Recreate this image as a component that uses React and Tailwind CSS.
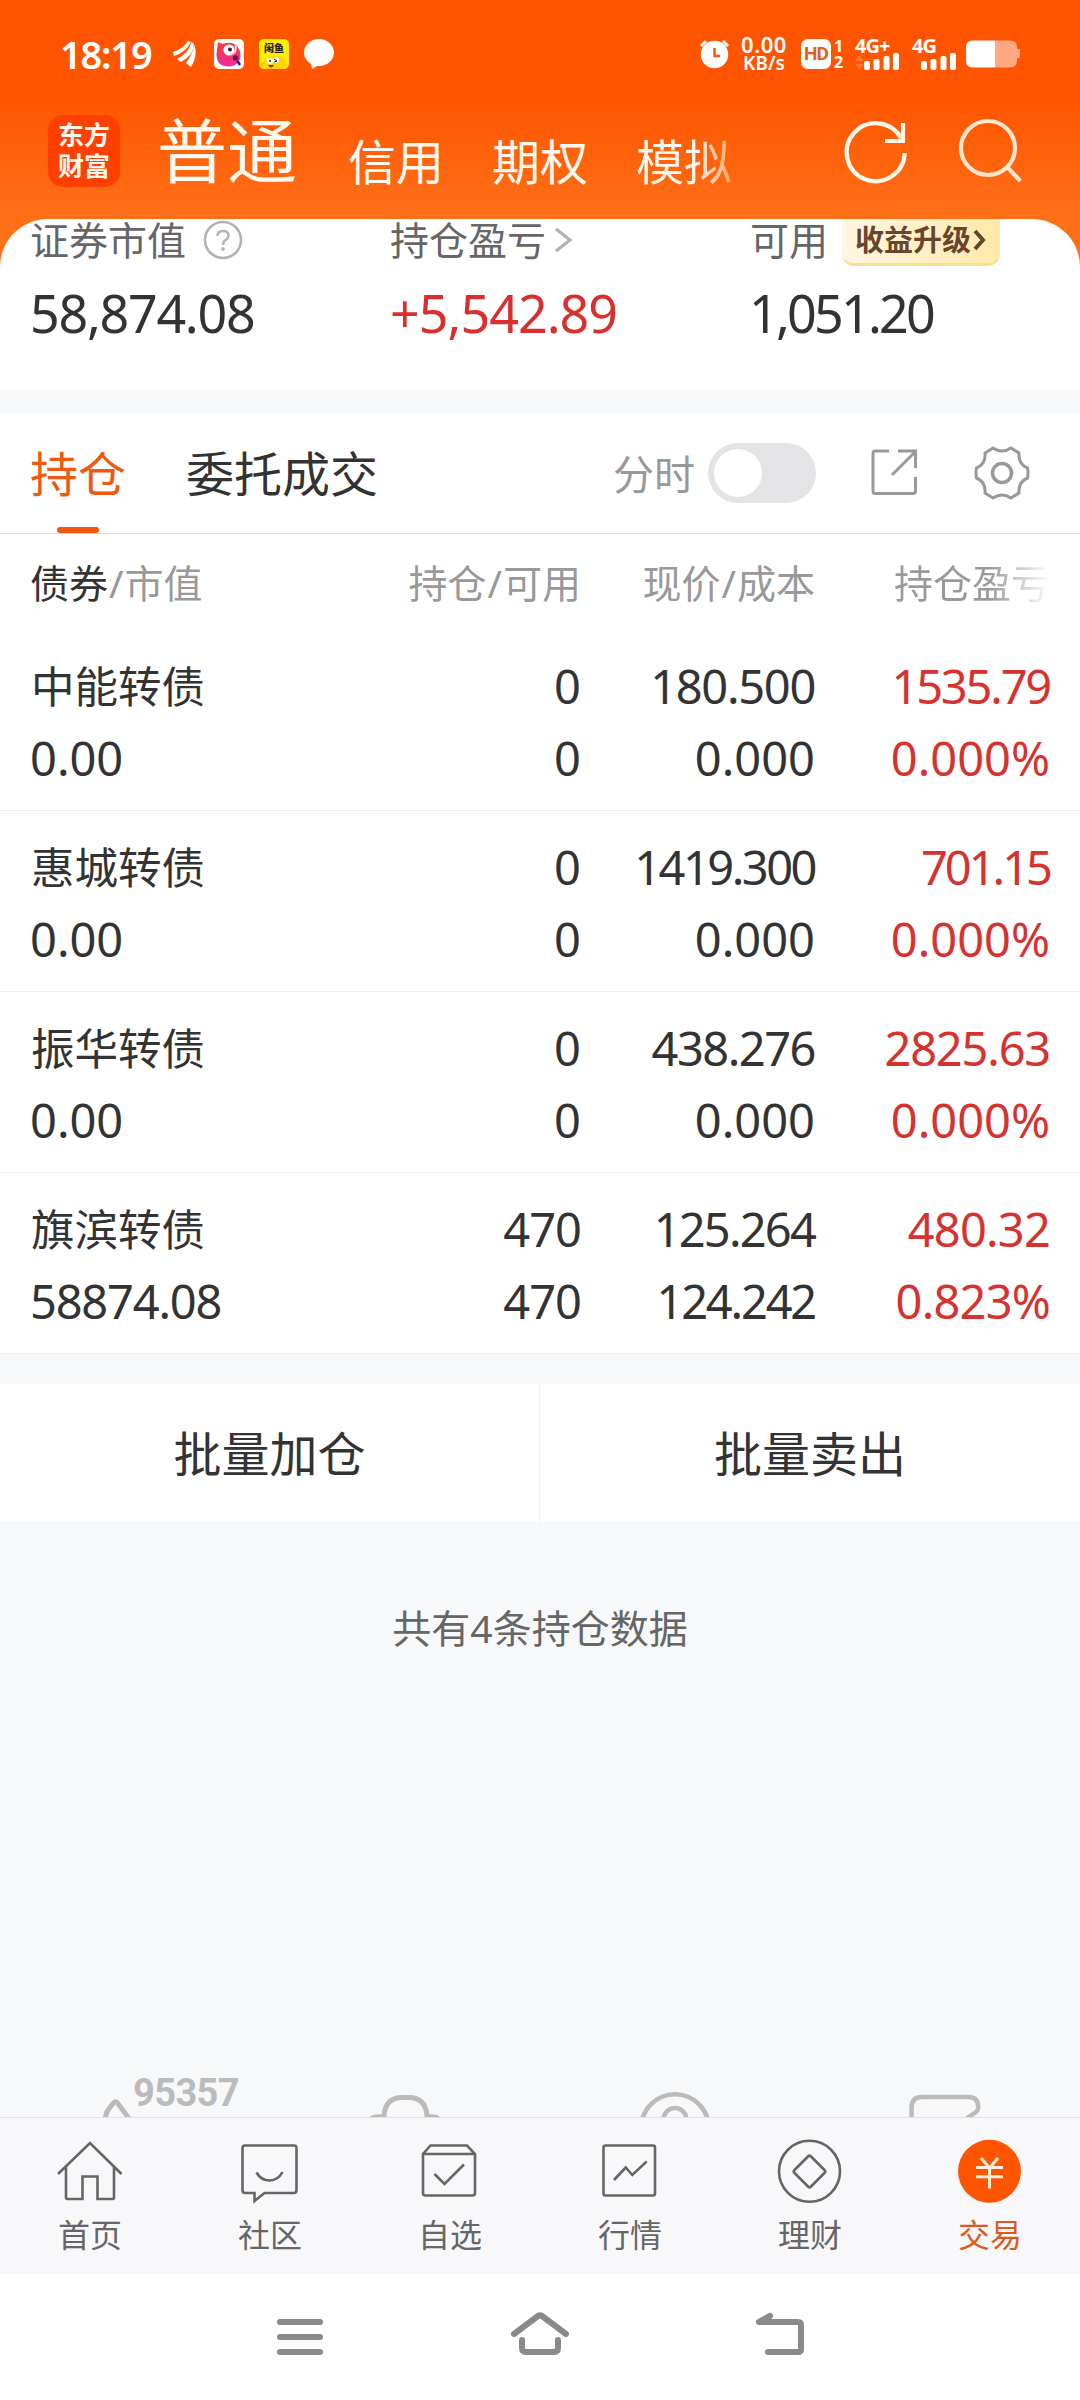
const holdings = [
    {
        name: "中能转债",
        value: "0.00",
        amount: "0",
        usable: "0",
        price: { text: "180.500", spacing: "tracking-[-1.3px]" },
        cost: { text: "0.000", spacing: "" },
        profit: { text: "1535.79", spacing: "tracking-[-2.2px]" },
        rate: { text: "0.000%", spacing: "" },
    },
    {
        name: "惠城转债",
        value: "0.00",
        amount: "0",
        usable: "0",
        price: { text: "1419.300", spacing: "tracking-[-2.500px]" },
        cost: { text: "0.000", spacing: "" },
        profit: { text: "701.15", spacing: "tracking-[-3px]" },
        rate: { text: "0.000%", spacing: "" },
    },
    {
        name: "振华转债",
        value: "0.00",
        amount: "0",
        usable: "0",
        price: { text: "438.276", spacing: "tracking-[-1.500px]" },
        cost: { text: "0.000", spacing: "" },
        profit: { text: "2825.63", spacing: "tracking-[-1.2px]" },
        rate: { text: "0.000%", spacing: "" },
    },
    {
        name: "旗滨转债",
        value: "58874.08",
        amount: "470",
        usable: "470",
        price: { text: "125.264", spacing: "tracking-[-1.8px]" },
        cost: { text: "124.242", spacing: "tracking-[-2.2px]" },
        profit: { text: "480.32", spacing: "tracking-[-0.8px]" },
        rate: { text: "0.823%", spacing: "tracking-[-0.8px]" },
    },
];

function SignalBars() {
    return (
        <svg width="36" height="17" viewBox="0 0 36 17" fill="white">
            <rect x="0" y="8" width="6" height="9" rx="2" />
            <rect x="9.500" y="6" width="6" height="11" rx="2" />
            <rect x="19.500" y="3" width="6" height="14" rx="2" />
            <rect x="29" y="0" width="6" height="17" rx="2" />
        </svg>
    );
}

function StatusBar() {
    return (
        <div className="flex h-[96px] pt-[32px] text-white">
            <div className="flex h-[44px] w-[700px] items-center pl-[60px]">
                <span className="w-[113px] text-[38px] leading-[44px] font-semibold tracking-[-1.2px]">
                    18:19
                </span>
                <svg width="23" height="26" viewBox="0 0 23 26" fill="white">
                    <path d="M0 11 Q10 8 15 0 L18 1 Q13 11 1 15 Z" />
                    <path d="M4 18 Q16 12 18.500 1 L21 3 Q21 14 8 21 Z" />
                    <path d="M13 22 Q19 14 21.500 4 Q25 15 18 26 Z" />
                </svg>
                <svg className="ml-[18px]" width="30" height="30" viewBox="0 0 30 30">
                    <defs>
                        <linearGradient id="bird" x1="0" y1="0" x2="0" y2="1">
                            <stop offset="0" stopColor="#f2413a" />
                            <stop offset="1" stopColor="#f02c9c" />
                        </linearGradient>
                    </defs>
                    <rect width="30" height="30" rx="5" fill="white" />
                    <path
                        d="M4 3 Q8 6 12 4 Q22 2 26 12 Q29 25 16 27.500 Q3 28 2.500 16 Q3 9 4 3 Z"
                        fill="url(#bird)"
                    />
                    <circle cx="15" cy="11" r="5.500" fill="white" />
                    <circle cx="16" cy="10.500" r="2" fill="#4a1040" />
                    <path d="M17 15.500 Q23 14 21.500 6" fill="none" stroke="#ffd0c0" strokeWidth="2" />
                    <circle cx="21.500" cy="19" r="2.700" fill="#6a0f6e" />
                    <path d="M23.500 22 L26 26" stroke="#2b1a70" strokeWidth="2.500" />
                </svg>
                <div className="ml-[15px] flex h-[30px] w-[30px] flex-col items-center overflow-hidden rounded-[5px] bg-[#fdee00]">
                    <span className="pt-[3px] text-[10px] leading-[12px] font-black text-[#222]">
                        闲鱼
                    </span>
                    <svg width="30" height="15" viewBox="0 0 30 15">
                        <path d="M6 15 Q5 3 15 2 Q25 1 28 9 V15 Z" fill="#ffd400" />
                        <circle cx="11" cy="7" r="3" fill="white" />
                        <circle cx="17" cy="6" r="3" fill="white" />
                        <circle cx="11" cy="7" r="1" fill="#222" />
                        <path d="M15 5 L18 7 L15 8" stroke="#222" fill="none" />
                        <path d="M9 11 H15 Q12 16 9 11" fill="#8a2a10" />
                        <circle cx="4" cy="10" r="2" fill="#ffc400" />
                    </svg>
                </div>
                <svg className="ml-[15px]" width="30" height="30" viewBox="0 0 30 30" fill="white">
                    <ellipse cx="15" cy="13.500" rx="15" ry="13.500" />
                    <path d="M7 23 L8 30 L15 26 Z" />
                </svg>
            </div>
            <div className="flex h-[44px] items-center">
                <svg width="30" height="30" viewBox="0 0 30 30" fill="none">
                    <circle cx="14.500" cy="15.500" r="13.700" fill="white" />
                    <path d="M1 7 L6 2 M28 7 L23 2" stroke="white" strokeWidth="3" />
                    <path d="M14.500 9 V17 H20" stroke="#ff5500" strokeWidth="2.500" />
                </svg>
                <div className="ml-[7px] flex w-[54px] flex-col items-center font-semibold">
                    <span className="text-[22px] leading-[19px] tracking-[0.5px]">0.00</span>
                    <span className="text-[19px] leading-[19px]">KB/s</span>
                </div>
                <div className="ml-[10px] flex h-[30px] w-[30px] items-center justify-center rounded-[7px] bg-white font-[Roboto] text-[19px] leading-[30px] font-bold tracking-[-1px] text-[#e0611c]">
                    HD
                </div>
                <div className="ml-[2px] flex w-[11px] flex-col items-center text-[16px] leading-[16px] font-bold">
                    <span>1</span>
                    <span>2</span>
                </div>
                <div className="ml-[11px] flex w-[46px] flex-col">
                    <span className="text-[20px] leading-[14px] font-bold tracking-[-1px]">4G+</span>
                    <div className="flex h-[17px] items-end">
                        <svg width="9" height="15" viewBox="0 0 9 15" fill="#ff7433">
                            <path d="M0 6 L4.500 0 L9 6 Z M0 9 L4.500 15 L9 9 Z" />
                        </svg>
                        <SignalBars />
                    </div>
                </div>
                <div className="ml-[11px] flex w-[46px] flex-col">
                    <span className="text-[20px] leading-[14px] font-bold tracking-[-1px]">4G</span>
                    <div className="flex h-[17px] items-end pl-[9px]">
                        <SignalBars />
                    </div>
                </div>
                <svg className="ml-[8px]" width="54" height="28" viewBox="0 0 54 28">
                    <path
                        d="M29 0.500 H44 Q51 0.500 51 7 V9 H54 V18 H51 V21 Q51 27.500 44 27.500 H29 Z"
                        fill="#ffa983"
                    />
                    <path d="M29 0.500 V27.500 H7 Q0 27.500 0 21 V7 Q0 0.500 7 0.500 Z" fill="white" />
                </svg>
            </div>
        </div>
    );
}

function AccountTabs() {
    return (
        <div className="flex h-[123px] text-[#fff9f0]">
            <div className="mt-[19px] ml-[48px] flex h-[72px] w-[72px] flex-col items-center justify-center rounded-[15px] bg-[#ff4000] text-[26px] leading-[31px] font-bold">
                <span>东方</span>
                <span>财富</span>
            </div>
            <span className="mt-[15px] ml-[37px] w-[141px] text-[70px] leading-[80px]">普通</span>
            <div className="mt-[36px] ml-[50px] flex gap-[48px] text-[48px] leading-[60px]">
                <span>信用</span>
                <span>期权</span>
                <span className="bg-gradient-to-r from-[#fff9f0] from-60% to-[#ffa56a] bg-clip-text text-transparent">
                    模拟
                </span>
            </div>
            <svg className="mt-[20px] ml-[108px]" width="72" height="72" viewBox="0 0 72 72" fill="none">
                <g stroke="#fff7ea" strokeWidth="4.200">
                    <path d="M64.700 37 A29 29 0 1 1 61 22" />
                    <path d="M63 7 V25 H45" />
                </g>
            </svg>
            <svg className="mt-[20px] ml-[41px]" width="72" height="72" viewBox="0 0 72 72" fill="none">
                <g stroke="#ffe6cf" strokeWidth="4.200">
                    <circle cx="35" cy="32" r="27" />
                    <path d="M54 51 L67.500 65" />
                </g>
            </svg>
        </div>
    );
}

function Summary() {
    return (
        <div className="grid h-[170px] grid-cols-[360px_360px_1fr] rounded-t-[48px] bg-white pl-[30px]">
            <div>
                <div className="flex h-[42px] items-center">
                    <span className="text-[39px] leading-[40px] text-[#666]">证券市值</span>
                    <svg className="ml-[17px]" width="40" height="40" viewBox="0 0 40 40" fill="none">
                        <g stroke="#b4b4b4" strokeWidth="2.600">
                            <circle cx="20" cy="20" r="18" />
                            <path d="M14.500 16 Q14.500 11 20 11 Q25.500 11 25.500 15.500 Q25.500 18 22.500 20 Q20 21.500 20 25" />
                        </g>
                        <circle cx="20" cy="29" r="1.900" fill="#b4b4b4" />
                    </svg>
                </div>
                <p className="mt-[22px] text-[52px] leading-[60px] tracking-[-1.3px] text-[#333]">
                    58,874.08
                </p>
            </div>
            <div>
                <div className="flex h-[42px] items-center">
                    <span className="text-[39px] leading-[40px] text-[#666]">持仓盈亏</span>
                    <svg className="ml-[8px]" width="20" height="28" viewBox="0 0 20 28" fill="none">
                        <path d="M2 3 L16 14 L2 25" stroke="#b0b0b0" strokeWidth="3" />
                    </svg>
                </div>
                <p className="mt-[22px] text-[52px] leading-[60px] tracking-[-1px] text-[#d9302f]">
                    +5,542.89
                </p>
            </div>
            <div>
                <div className="flex h-[47px] items-start">
                    <span className="text-[39px] leading-[42px] text-[#666]">可用</span>
                    <div className="ml-[14px] flex h-[47px] w-[158px] items-start rounded-b-[12px] border-b-[3px] border-[#f9df90] bg-gradient-to-r from-[#fff6e4] to-[#ffe9a8] pl-[13px]">
                        <span className="text-[29px] leading-[42px] font-bold text-[#6a452b]">
                            收益升级
                        </span>
                        <svg className="mt-[10px]" width="16" height="22" viewBox="0 0 16 22" fill="none">
                            <path d="M4 2 L12 11 L4 20" stroke="#6a452b" strokeWidth="4" />
                        </svg>
                    </div>
                </div>
                <p className="mt-[17px] -ml-[1px] text-[52px] leading-[60px] tracking-[-2.800px] text-[#333]">
                    1,051.20
                </p>
            </div>
        </div>
    );
}

function PositionTabs() {
    return (
        <div className="flex h-[121px] border-b border-[#dcdcdc] bg-white pl-[30px]">
            <div className="flex w-[96px] flex-col items-center">
                <span className="mt-[31px] text-[48px] leading-[60px] text-[#ee5a12]">持仓</span>
                <span className="mt-[23px] h-[6px] w-[42px] rounded-full bg-[#f2570f]" />
            </div>
            <span className="mt-[31px] ml-[60px] w-[192px] text-[48px] leading-[60px] text-[#333]">
                委托成交
            </span>
            <span className="mt-[31px] ml-[235px] text-[41px] leading-[60px] text-[#999]">分时</span>
            <div className="mt-[30px] ml-[13px] h-[60px] w-[108px] rounded-full bg-[#e4e4e7] p-[6px]">
                <div className="h-[48px] w-[48px] rounded-full bg-white" />
            </div>
            <svg className="mt-[35px] ml-[54px]" width="48" height="48" viewBox="0 0 48 48" fill="none">
                <g stroke="#999" strokeWidth="3">
                    <path d="M19 3 H5 Q3 3 3 5 V43 Q3 45.500 5 45.500 H43 Q45.500 45.500 45.500 43 V29" />
                    <path d="M28 3 H45.500 V20 M44 5 L22 27" />
                </g>
            </svg>
            <svg className="mt-[33px] ml-[56px]" width="56" height="56" viewBox="0 0 56 56" fill="none">
                <g stroke="#999" strokeWidth="3">
                    <path d="M19 2 Q28 8 37 2 L45 7 Q44 18 53.500 22 Q54.500 27 53.500 32 Q44 36 45 47 L37 52 Q28 46 19 52 L11 47 Q12 36 2.500 32 Q1.500 27 2.500 22 Q12 18 11 7 Z" />
                    <circle cx="28" cy="27" r="9.500" strokeWidth="3.500" />
                </g>
            </svg>
        </div>
    );
}

function HoldingRow({ item }) {
    const amountSpacing = item.amount.length > 1 ? "tracking-[-1px]" : "";
    return (
        <div className="grid h-[181px] grid-cols-[283px_268px_234px_235px] border-b border-[#ececee] bg-white pt-[20px] pl-[30px] text-[47px] leading-[72px] text-[#333]">
            <div>
                <p className="pl-[1px] text-[43.500px] leading-[72px]">{item.name}</p>
                <p className={item.value.length > 4 ? "tracking-[-1.2px]" : ""}>{item.value}</p>
            </div>
            <div className={`text-right ${amountSpacing}`}>
                <p>{item.amount}</p>
                <p>{item.usable}</p>
            </div>
            <div className="text-right">
                <p className={item.price.spacing}>{item.price.text}</p>
                <p className={item.cost.spacing}>{item.cost.text}</p>
            </div>
            <div className="text-right text-[#d63230]">
                <p className={item.profit.spacing}>{item.profit.text}</p>
                <p className={item.rate.spacing}>{item.rate.text}</p>
            </div>
        </div>
    );
}

function HoldingTable() {
    return (
        <div>
            <div className="grid h-[96px] grid-cols-[283px_268px_234px_235px] bg-white pt-[19px] pl-[30px] text-[39px] leading-[60px] text-[#999]">
                <div>
                    <span className="text-[#333]">债券</span>
                    <span className="px-[1px]">/</span>市值
                </div>
                <div className="text-right">
                    持仓<span className="px-[1px]">/</span>可用
                </div>
                <div className="text-right">
                    现价<span className="px-[1px]">/</span>成本
                </div>
                <div className="text-right">
                    <span className="bg-gradient-to-r from-[#999] from-60% to-white bg-clip-text text-transparent">
                        持仓盈亏
                    </span>
                </div>
            </div>
            {holdings.map((item) => (
                <HoldingRow key={item.name} item={item} />
            ))}
        </div>
    );
}

// 底部服务入口，只露出上半部分
function ServiceStrip() {
    return (
        <div className="grid h-[42px] grid-cols-4 overflow-hidden">
            <div className="flex pl-[96px]">
                <svg width="37" height="42" viewBox="0 0 37 42" fill="none">
                    <path d="M9.500 43 Q9.500 38 13 33.500 L17.500 28 Q19.500 25.500 21.500 28 L33 43.500" stroke="#bbb" strokeWidth="5" />
                </svg>
                <span className="font-[Roboto] text-[38px] leading-[37px] font-bold tracking-[-0.6px] text-[#bbb]">
                    95357
                </span>
            </div>
            <div className="flex justify-center">
                <svg width="80" height="42" viewBox="0 0 80 42" fill="none">
                    <path d="M19 43 V40 Q21 22.500 37 22.500 H44 Q60 22.500 62 40 V43" stroke="#bbb" strokeWidth="5" />
                    <path d="M5 42 Q8 38.500 18 39.500 V42 Z M62 42 V39.500 Q72 38.500 75 42 Z" fill="#bbb" />
                </svg>
            </div>
            <div className="flex justify-center">
                <svg width="80" height="42" viewBox="0 0 80 42" fill="none" stroke="#bbb">
                    <circle cx="40" cy="53" r="33.800" strokeWidth="4.500" />
                    <circle cx="40" cy="44.500" r="11.500" strokeWidth="4.500" />
                </svg>
            </div>
            <div className="flex justify-center">
                <svg width="80" height="42" viewBox="0 0 80 42" fill="none">
                    <path d="M6.500 43 V33 Q6.500 22 17 22 H63 Q73 22 73 31 Q74 34 71 37 L61 44" stroke="#bbb" strokeWidth="4.500" />
                </svg>
            </div>
        </div>
    );
}

const navItems = [
    {
        label: "首页",
        icon: (
            <path d="M4 39 L36 8 L67.500 39 M12 31 V62.500 Q12 64 13.500 64 H28.500 V41.500 H43.500 V64 H59 Q60 64 60 62.500 V31" />
        ),
    },
    {
        label: "社区",
        icon: (
            <>
                <path d="M11 10.500 H60 Q62.500 10.500 62.500 13 V55 Q62.500 58 60 58 H30.500 L20.500 66 V58 H11 Q8.500 58 8.500 55 V13 Q8.500 10.500 11 10.500 Z" />
                <path d="M22.500 37.500 Q27 45.500 35.500 45.500 Q44 45.500 48.500 37" />
            </>
        ),
    },
    {
        label: "自选",
        icon: (
            <>
                <path d="M9 19 L16.500 10.500 H53 L61 19 V58 Q61 60.500 58.500 60.500 H11.500 Q9 60.500 9 58 V19 H61" />
                <path d="M20.500 39 L30.500 49 L50 29.500" />
            </>
        ),
    },
    {
        label: "行情",
        icon: (
            <>
                <rect x="9.500" y="10.500" width="51.500" height="50" rx="2" />
                <path d="M20 45 L31.700 32.500 L38.300 40 L52.700 26.500" />
            </>
        ),
    },
    {
        label: "理财",
        icon: (
            <>
                <circle cx="35.500" cy="36.300" r="30.500" />
                <path d="M34 21.500 Q35.500 20 37 21.500 L50.500 35 Q52 36.500 50.500 38 L37 51.500 Q35.500 53 34 51.500 L20.500 38 Q19 36.500 20.500 35 Z" />
            </>
        ),
    },
    {
        label: "交易",
        active: true,
        icon: (
            <>
                <circle cx="35.500" cy="36.300" r="31.500" fill="#ff5500" stroke="none" />
                <path
                    d="M27 23 L35.500 33 L44 23 M22 32.500 H49 M22 41.700 H49 M35.500 32 V53.500"
                    stroke="#fff0dc"
                    strokeWidth="3"
                />
            </>
        ),
    },
];

function BottomNav() {
    return (
        <div className="grid h-[157px] grid-cols-6 border-t border-[#e2e3e5] bg-[#f8f8fb] pt-[17px]">
            {navItems.map((item) => (
                <div key={item.label} className="flex flex-col items-center gap-1">
                    <svg width="72" height="72" viewBox="0 0 72 72" fill="none" stroke="#666" strokeWidth="2.600">
                        {item.icon}
                    </svg>
                    <span
                        className={`text-[32px] leading-[48px] ${
                            item.active ? "text-[#dc5b1c]" : "text-[#666]"
                        }`}
                    >
                        {item.label}
                    </span>
                </div>
            ))}
        </div>
    );
}

function SystemNav() {
    return (
        <div className="flex h-[126px] justify-center gap-[168px] bg-white pt-[26px]">
            <svg width="72" height="72" viewBox="0 0 72 72" fill="none" stroke="#8a8a8a" strokeWidth="6" strokeLinecap="round">
                <path d="M16 22 H56 M16 37 H56 M16 52 H56" />
            </svg>
            <svg width="72" height="72" viewBox="0 0 72 72" fill="none" stroke="#8a8a8a" strokeWidth="6" strokeLinecap="round" strokeLinejoin="round">
                <path d="M10 34 L34 16 Q36 14.500 38 16 L62 34 M18 40 V48 Q18 52 22 52 H50 Q54 52 54 48 V40" />
            </svg>
            <svg width="72" height="72" viewBox="0 0 72 72" fill="none" stroke="#8a8a8a" strokeWidth="6" strokeLinecap="round" strokeLinejoin="round">
                <path d="M26 16 L15 22 H54 Q57 22 57 25 V49 Q57 52 54 52 H24" />
            </svg>
        </div>
    );
}

export default function App() {
    return (
        <div className="flex h-[2400px] w-[1080px] flex-col overflow-hidden bg-[#f7f8fa] font-['Noto_Sans','Noto_Sans_CJK_SC',sans-serif] whitespace-nowrap">
            <div className="bg-[linear-gradient(180deg,#ff5500_0px,#ff5500_96px,#ff7019_219px,#ff7019_100%)]">
                <StatusBar />
                <AccountTabs />
                <Summary />
            </div>
            <div className="h-[24px] shrink-0" />
            <PositionTabs />
            <HoldingTable />
            <div className="mt-[30px] grid h-[138px] shrink-0 grid-cols-2 bg-white text-center text-[48px] leading-[139px] text-[#333]">
                <span className="border-r border-[#f4f4f6]">批量加仓</span>
                <span>批量卖出</span>
            </div>
            <p className="mt-[76px] text-center text-[39px] leading-[60px] text-[#666]">
                共有4条持仓数据
            </p>
            <div className="mt-auto">
                <ServiceStrip />
                <BottomNav />
                <SystemNav />
            </div>
        </div>
    );
}
